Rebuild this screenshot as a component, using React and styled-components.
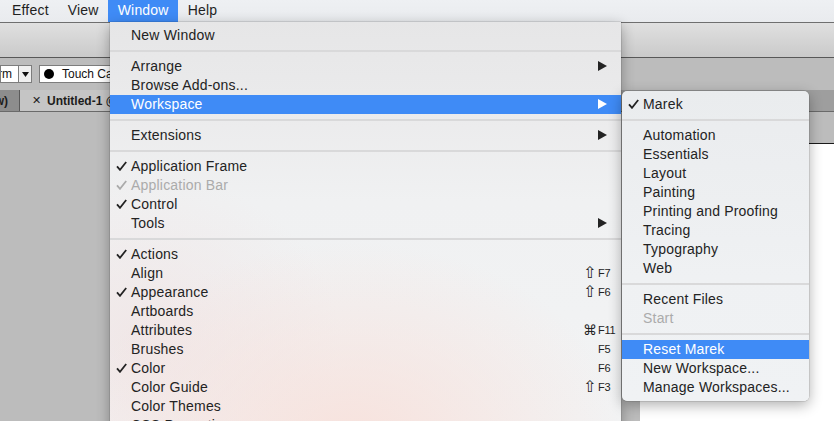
import React from 'react';
import styled, { createGlobalStyle } from 'styled-components';

const Global = createGlobalStyle`
  html, body { margin: 0; padding: 0; width: 834px; height: 421px; overflow: hidden; background: #bcbcbc; }
  body { font-family: "Liberation Sans", Arial, sans-serif; -webkit-font-smoothing: antialiased; }
  #root { width: 834px; height: 421px; overflow: hidden; }
  * { box-sizing: border-box; }
`;

const Screen = styled.div`
  position: relative;
  width: 834px;
  height: 421px;
  display: flex;
  flex-direction: column;
  overflow: hidden;
`;

/* ---------- system menu bar ---------- */
const MenuBar = styled.div`
  height: 22px;
  flex: none;
  display: flex;
  padding-left: 2.5px;
  background: linear-gradient(#eef0f3, #e9ebee);
`;

const BarItem = styled.div`
  padding: 0 9.5px 1px;
  line-height: 21px;
  font-size: 14px;
  letter-spacing: 0.2px;
  color: ${p => (p.$active ? '#fff' : '#1f1f1f')};
  background: ${p => (p.$active ? '#3f8bf6' : 'transparent')};
`;

/* ---------- app chrome ---------- */
const AppToolbar = styled.div`
  height: 36px;
  flex: none;
  border-top: 1px solid #6f6f6f;
  border-bottom: 1px solid #585858;
  background: linear-gradient(#e0e0e0, #cacaca);
`;

const ControlBar = styled.div`
  height: 32px;
  flex: none;
  display: flex;
  align-items: center;
  background: #bcbcbc;
`;

const TextField = styled.div`
  width: ${p => p.$w}px;
  height: 18px;
  flex: none;
  display: flex;
  align-items: center;
  justify-content: ${p => (p.$end ? 'flex-end' : 'flex-start')};
  overflow: hidden;
  white-space: nowrap;
  background: #fff;
  border: 1px solid #7d7d7d;
  font-size: 12px;
  color: #111;
  padding: ${p => p.$pad};
`;

const DropButton = styled.div`
  width: 13px;
  height: 18px;
  flex: none;
  display: flex;
  align-items: center;
  justify-content: center;
  background: #efefef;
  border: 1px solid #7d7d7d;
  border-left: none;
  margin-right: 7px;
`;

const Dot = styled.span`
  width: 10px;
  height: 10px;
  border-radius: 50%;
  background: #000;
  flex: none;
  margin-right: 8px;
`;

const TabBar = styled.div`
  height: 22px;
  flex: none;
  display: flex;
  background: #9e9e9e;
  border-bottom: 1px solid #6a6a6a;
`;

const Tab = styled.div`
  display: flex;
  align-items: center;
  justify-content: ${p => (p.$end ? 'flex-end' : 'flex-start')};
  overflow: hidden;
  white-space: nowrap;
  width: ${p => p.$w}px;
  flex: none;
  padding: ${p => p.$pad};
  background: ${p => p.$bg};
  border-left: ${p => (p.$divider ? '1px solid #5a5a5a' : 'none')};
  font-size: 12px;
  font-weight: bold;
  color: #1c1c1c;
`;

const Close = styled.span`
  font-size: 11px;
  font-weight: normal;
  margin-right: 6px;
`;

const Canvas = styled.div`
  flex: 1;
  display: flex;
  padding-top: 31px;
  background: #bcbcbc;
`;

const Artboard = styled.div`
  flex: 1;
  margin-left: 640px;
  background: #fff;
  border-top: 1.5px solid #1a1a1a;
`;

/* ---------- menus ---------- */
const Menu = styled.div`
  position: absolute;
  left: ${p => p.$left}px;
  top: ${p => p.$top}px;
  width: ${p => p.$width}px;
  ${p => (p.$height ? `height: ${p.$height}px;` : '')}
  padding: 4px 0;
  border-radius: ${p => (p.$round ? '5px' : '0 0 5px 5px')};
  background: ${p => p.$bg};
  box-shadow: 0 0 0 0.5px rgba(0, 0, 0, 0.18), 0 4px 14px rgba(0, 0, 0, 0.32);
  font-size: 14px;
  letter-spacing: 0.2px;
  overflow: hidden;
`;

const Row = styled.div`
  height: 19px;
  display: flex;
  align-items: center;
  padding: 0 0 2px 6px;
  white-space: nowrap;
  color: ${p => (p.$hl ? '#fff' : p.$disabled ? '#ababab' : '#232323')};
  background: ${p => (p.$hl ? '#3f8bf6' : 'transparent')};
`;

const CheckSlot = styled.span`
  width: 15px;
  flex: none;
  display: flex;
  align-items: center;
  padding-top: 1px;
`;

const Label = styled.span`
  flex: 1;
`;

const ArrowSlot = styled.span`
  display: flex;
  margin-right: 14px;
  padding-top: 1px;
`;

const Shortcut = styled.span`
  display: flex;
  align-items: center;
  margin-right: 6px;
  letter-spacing: 0;
`;

const Mod = styled.span`
  width: 13px;
  text-align: right;
  font-family: "DejaVu Sans", sans-serif;
  font-size: ${p => (p.$big ? 16 : 14)}px;
  line-height: 14px;
`;

const Key = styled.span`
  width: 17px;
  margin-left: 2px;
  font-size: 11px;
  letter-spacing: -0.3px;
`;

const Separator = styled.div`
  height: 2px;
  margin: 5px 0;
  background: #d9d9da;
`;

const Check = () => (
  <svg width="11" height="10" viewBox="0 0 11 10">
    <path d="M1 5.3 L4 8.8 L10.2 1" fill="none" stroke="currentColor" strokeWidth="1.8" strokeLinejoin="miter" />
  </svg>
);

const Arrow = () => (
  <svg width="9" height="10" viewBox="0 0 9 10">
    <polygon points="0,0 9,5 0,10" fill="currentColor" />
  </svg>
);

const mainItems = [
  { label: 'New Window' },
  'sep',
  { label: 'Arrange', sub: true },
  { label: 'Browse Add-ons...' },
  { label: 'Workspace', sub: true, hl: true },
  'sep',
  { label: 'Extensions', sub: true },
  'sep',
  { label: 'Application Frame', check: true },
  { label: 'Application Bar', check: true, disabled: true },
  { label: 'Control', check: true },
  { label: 'Tools', sub: true },
  'sep',
  { label: 'Actions', check: true },
  { label: 'Align', mod: '⇧', key: 'F7' },
  { label: 'Appearance', check: true, mod: '⇧', key: 'F6' },
  { label: 'Artboards' },
  { label: 'Attributes', mod: '⌘', key: 'F11' },
  { label: 'Brushes', key: 'F5' },
  { label: 'Color', check: true, key: 'F6' },
  { label: 'Color Guide', mod: '⇧', key: 'F3' },
  { label: 'Color Themes' },
  { label: 'CSS Properties' },
];

const subItems = [
  { label: 'Marek', check: true },
  'sep',
  { label: 'Automation' },
  { label: 'Essentials' },
  { label: 'Layout' },
  { label: 'Painting' },
  { label: 'Printing and Proofing' },
  { label: 'Tracing' },
  { label: 'Typography' },
  { label: 'Web' },
  'sep',
  { label: 'Recent Files' },
  { label: 'Start', disabled: true },
  'sep',
  { label: 'Reset Marek', hl: true },
  { label: 'New Workspace...' },
  { label: 'Manage Workspaces...' },
];

const MenuItems = ({ items }) =>
  items.map((it, i) =>
    it === 'sep' ? (
      <Separator key={i} />
    ) : (
      <Row key={i} $hl={it.hl} $disabled={it.disabled}>
        <CheckSlot>{it.check && <Check />}</CheckSlot>
        <Label>{it.label}</Label>
        {it.sub && (
          <ArrowSlot>
            <Arrow />
          </ArrowSlot>
        )}
        {it.key && (
          <Shortcut>
            <Mod $big={it.mod === '⇧'}>{it.mod || ''}</Mod>
            <Key>{it.key}</Key>
          </Shortcut>
        )}
      </Row>
    )
  );

const mainBg = `
  radial-gradient(ellipse 280px 210px at 240px 430px, rgba(248, 224, 218, 0.95), rgba(248, 224, 218, 0) 100%),
  radial-gradient(ellipse 200px 170px at 30px 320px, rgba(240, 226, 226, 0.7), rgba(240, 226, 226, 0) 100%),
  linear-gradient(#e6e6e7 0px, #ebebec 90px, #f0f1f2 180px, #f2f3f4 400px)
`;

const subBg = 'linear-gradient(#eaecee, #eff1f3 60%, #f0f2f4)';

export default function App() {
  return (
    <Screen>
      <Global />
      <MenuBar>
        <BarItem>Effect</BarItem>
        <BarItem>View</BarItem>
        <BarItem $active>Window</BarItem>
        <BarItem>Help</BarItem>
      </MenuBar>
      <AppToolbar />
      <ControlBar>
        <TextField $w={19} $end $pad="0 6px 0 0">Uniform</TextField>
        <DropButton>
          <svg width="7" height="5" viewBox="0 0 7 5">
            <polygon points="0,0 7,0 3.5,5" fill="#111" />
          </svg>
        </DropButton>
        <TextField $w={120} $pad="0 0 0 4px">
          <Dot />
          Touch Calligraphic Brush
        </TextField>
      </ControlBar>
      <TabBar>
        <Tab $w={19} $end $bg="#8d8d8d" $pad="0 11px 0 0">(Preview)</Tab>
        <Tab $w={300} $divider $bg="#c5c5c5" $pad="0 0 0 12px">
          <Close>✕</Close>
          Untitled-1 @ 100% (CMYK/GPU Preview)
        </Tab>
      </TabBar>
      <Canvas>
        <Artboard />
      </Canvas>

      <Menu $left={110} $top={22} $width={511} $height={420} $bg={mainBg}>
        <MenuItems items={mainItems} />
      </Menu>
      <Menu $left={622} $top={91} $width={187} $round $bg={subBg}>
        <MenuItems items={subItems} />
      </Menu>
    </Screen>
  );
}
